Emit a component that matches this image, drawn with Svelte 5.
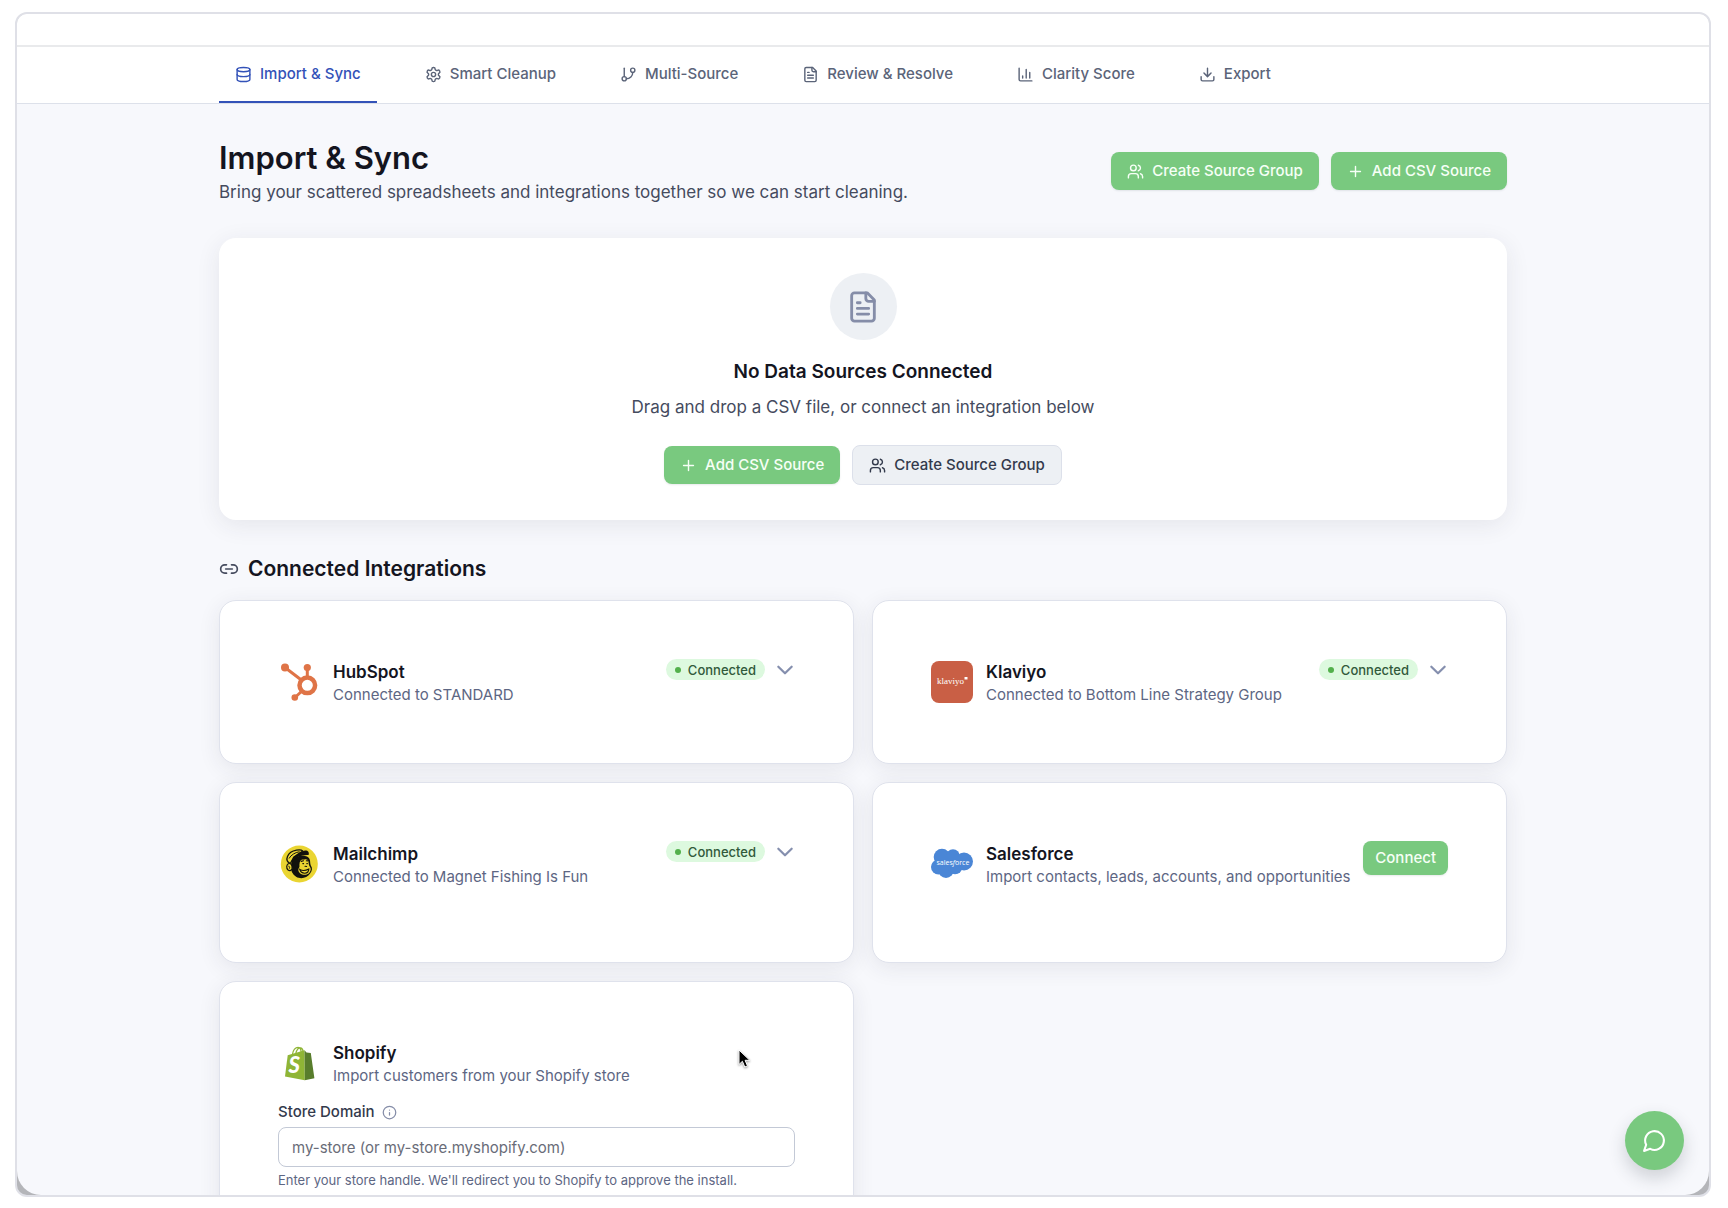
<script>
  const tabs = [
    { label: 'Import & Sync', icon: 'database', active: true },
    { label: 'Smart Cleanup', icon: 'gear' },
    { label: 'Multi-Source', icon: 'branch' },
    { label: 'Review & Resolve', icon: 'file' },
    { label: 'Clarity Score', icon: 'chart' },
    { label: 'Export', icon: 'download' }
  ];

  const integrations = [
    { id: 'hubspot', name: 'HubSpot', text: 'Connected to STANDARD', connected: true },
    { id: 'klaviyo', name: 'Klaviyo', text: 'Connected to Bottom Line Strategy Group', connected: true },
    { id: 'mailchimp', name: 'Mailchimp', text: 'Connected to Magnet Fishing Is Fun', connected: true },
    { id: 'salesforce', name: 'Salesforce', text: 'Import contacts, leads, accounts, and opportunities', action: 'Connect' },
    { id: 'shopify', name: 'Shopify', text: 'Import customers from your Shopify store', form: true }
  ];

  let domain = $state('');
</script>

{#snippet icon(name)}
  <svg class="icon" viewBox="0 0 24 24" aria-hidden="true">
    {#if name === 'database'}
      <ellipse cx="12" cy="5" rx="9" ry="3" />
      <path d="M3 5v14a9 3 0 0 0 18 0V5" />
      <path d="M3 12a9 3 0 0 0 18 0" />
    {:else if name === 'gear'}
      <path d="M12.22 2h-.44a2 2 0 0 0-2 2v.18a2 2 0 0 1-1 1.73l-.43.25a2 2 0 0 1-2 0l-.15-.08a2 2 0 0 0-2.73.73l-.22.38a2 2 0 0 0 .73 2.73l.15.1a2 2 0 0 1 1 1.72v.51a2 2 0 0 1-1 1.74l-.15.09a2 2 0 0 0-.73 2.73l.22.38a2 2 0 0 0 2.73.73l.15-.08a2 2 0 0 1 2 0l.43.25a2 2 0 0 1 1 1.73V20a2 2 0 0 0 2 2h.44a2 2 0 0 0 2-2v-.18a2 2 0 0 1 1-1.73l.43-.25a2 2 0 0 1 2 0l.15.08a2 2 0 0 0 2.73-.73l.22-.39a2 2 0 0 0-.73-2.73l-.15-.08a2 2 0 0 1-1-1.74v-.5a2 2 0 0 1 1-1.74l.15-.09a2 2 0 0 0 .73-2.73l-.22-.38a2 2 0 0 0-2.73-.73l-.15.08a2 2 0 0 1-2 0l-.43-.25a2 2 0 0 1-1-1.73V4a2 2 0 0 0-2-2z" />
      <circle cx="12" cy="12" r="3" />
    {:else if name === 'branch'}
      <path d="M6 3v12" />
      <circle cx="18" cy="6" r="3" />
      <circle cx="6" cy="18" r="3" />
      <path d="M18 9a9 9 0 0 1-9 9" />
    {:else if name === 'file'}
      <path d="M15 2H6a2 2 0 0 0-2 2v16a2 2 0 0 0 2 2h12a2 2 0 0 0 2-2V7Z" />
      <path d="M14 2v4a2 2 0 0 0 2 2h4" />
      <path d="M10 9H8M16 13H8M16 17H8" />
    {:else if name === 'chart'}
      <path d="M3 3v16a2 2 0 0 0 2 2h16" />
      <path d="M18 17V9M13 17V5M8 17v-3" />
    {:else if name === 'download'}
      <path d="M21 15v4a2 2 0 0 1-2 2H5a2 2 0 0 1-2-2v-4" />
      <path d="m7 10 5 5 5-5M12 15V3" />
    {:else if name === 'users'}
      <path d="M16 21v-2a4 4 0 0 0-4-4H6a4 4 0 0 0-4 4v2" />
      <circle cx="9" cy="7" r="4" />
      <path d="M22 21v-2a4 4 0 0 0-3-3.870M16 3.130a4 4 0 0 1 0 7.750" />
    {:else if name === 'plus'}
      <path d="M5 12h14M12 5v14" />
    {:else if name === 'link'}
      <path d="M9 17H7A5 5 0 0 1 7 7h2M15 7h2a5 5 0 1 1 0 10h-2M8 12h8" />
    {:else if name === 'info'}
      <circle cx="12" cy="12" r="10" />
      <path d="M12 16v-4M12 8h.01" />
    {:else if name === 'chat'}
      <path d="M7.900 20A9 9 0 1 0 4 16.100L2 22Z" />
    {/if}
  </svg>
{/snippet}

{#snippet logo(id)}
  <svg class="logo" viewBox="0 0 42 42" role="img" aria-label={id}>
    {#if id === 'hubspot'}
      <g stroke="#df7447" fill="none">
        <path stroke-width="3" d="M7 6.500 24 19.500M29.300 7v10M17 36.500l7-6.500" />
        <circle cx="29.300" cy="24.300" r="7.800" stroke-width="4.500" />
      </g>
      <g fill="#df7447">
        <circle cx="7" cy="6.500" r="4" />
        <circle cx="29.300" cy="6.500" r="3.600" />
        <circle cx="16.800" cy="36.500" r="3.300" />
      </g>
    {:else if id === 'klaviyo'}
      <rect width="42" height="42" rx="8" fill="#c95f45" />
      <text x="6" y="23" font-family="Liberation Serif, serif" font-size="9" fill="#ffffff">klaviyo</text>
      <path d="M33.500 16h3v2.500h-3z" fill="#ffffff" />
    {:else if id === 'mailchimp'}
      <circle cx="21.300" cy="21" r="18.500" fill="#ead532" />
      <path d="M14 17c3-3 8-5 13-4 3 .5 4.500 2 5 4.500.3 2 .2 3.500.8 5 2 2.500 1.300 5.500-.7 8-3.200 4.600-9.300 6-14 3.200-3.700-2.200-5.300-6-5.600-10.200z" fill="#12120c" />
      <path d="M21.500 21c0-3.200 2.200-5.200 4.500-4.300 1.600-1 4-.4 4.400 1.500.4 2 .2 3.800 1.300 5.300 1.900 2.300.9 5.200-1 6.900-2.500 2-6.300 1.700-8.700-.2-2-1.700-2.200-4.300-.7-6 .5-1-.1-2 .2-3.200z" fill="#ead532" />
      <path d="M21.800 26.500c2.800 1.600 6 1.200 9-.4-.2 2.600-1.800 4.200-4.200 4.100-2.400-.1-4.100-1.500-4.800-3.700zM23.200 18.400l2.300-.7M28.300 17.700l1.500.2M24.800 20.600h.8M28.800 20.600h.6M27 23.300l1.700.2" fill="none" stroke="#12120c" stroke-width="1.100" stroke-linecap="round" />
      <path d="M12.300 20.500C6 17.500 9 9 18.500 7.200c3-.6 5-.3 6.300.8l-9 6z" fill="#ead532" stroke="#12120c" stroke-width="1.300" stroke-linejoin="round" />
      <path d="M11 15.500C13 12 17 9.500 21.500 8.700" fill="none" stroke="#12120c" stroke-width="1" />
      <path d="M13.500 18c2.500-5 7-9 13.500-10.500 3-.2 4.500 1.700 3.600 4.500-6-.5-11.600 1.500-17.100 6z" fill="#12120c" />
      <path d="M11 20.500c-2.700.4-3 4.800-.9 6.500 1.600 1.200 3.800.3 4-1.700.1-2.200-.6-5-3.100-4.800z" fill="#ead532" stroke="#12120c" stroke-width="1.200" />
      <path d="M10.500 23.200c1 .1 1.500 1 .9 2.400" fill="none" stroke="#12120c" stroke-width="1" />
    {:else if id === 'salesforce'}
      <g fill="#4a86d6">
        <circle cx="11" cy="14" r="8.300" />
        <circle cx="22" cy="13" r="6.800" />
        <circle cx="33" cy="18.500" r="9" />
        <circle cx="7.500" cy="24" r="7.500" />
        <circle cx="15" cy="27" r="7.900" />
        <circle cx="24" cy="24" r="7.300" />
        <path d="M8 12h24v14H8z" />
      </g>
      <text x="5.500" y="21.500" font-family="Open Sans, sans-serif" font-size="7" fill="#ffffff">sales<tspan font-style="italic">f</tspan>orce</text>
    {:else if id === 'shopify'}
      <path d="M14.500 12.500c.5-4.500 3-7.200 5.600-7.200 2 0 3 2.300 3.100 5.500M17.800 11.500c.7-3.700 2.800-6 5-5.500 1.500.4 2.200 2.100 2.500 4" fill="none" stroke="#8fb536" stroke-width="1.300" />
      <path d="M9.700 13.200 26.500 8.200 26.800 38.300 7 34.600z" fill="#8fb536" />
      <path d="m26.500 8.200 2 2.300 4.300.5 3.600 25.200-9.600 2.100z" fill="#587d2c" />
      <text x="10.500" y="31" font-family="Lato, sans-serif" font-size="22" font-weight="900" font-style="italic" fill="#ffffff">S</text>
    {/if}
  </svg>
{/snippet}

<div class="page">
  <div class="frame">
    <div class="screen">
      <div class="strip"></div>
      <nav>
        <div class="container tabs">
          {#each tabs as tab}
            <a href="#{tab.icon}" class="tab" class:active={tab.active} aria-current={tab.active ? 'page' : undefined}>
              {@render icon(tab.icon)}{tab.label}
            </a>
          {/each}
        </div>
      </nav>

      <main class="container">
        <header>
          <div>
            <h1>Import &amp; Sync</h1>
            <p class="lead">Bring your scattered spreadsheets and integrations together so we can start cleaning.</p>
          </div>
          <div class="actions">
            <button class="btn">{@render icon('users')}Create Source Group</button>
            <button class="btn">{@render icon('plus')}Add CSV Source</button>
          </div>
        </header>

        <section class="empty">
          <div class="disc">{@render icon('file')}</div>
          <h2>No Data Sources Connected</h2>
          <p class="lead">Drag and drop a CSV file, or connect an integration below</p>
          <div class="actions">
            <button class="btn">{@render icon('plus')}Add CSV Source</button>
            <button class="btn secondary">{@render icon('users')}Create Source Group</button>
          </div>
        </section>

        <h2 class="section-title">{@render icon('link')}Connected Integrations</h2>

        <div class="grid">
          {#each integrations as item}
            <article class="card" class:tall={item.action}>
              <div class="row">
                {@render logo(item.id)}
                <div class="details">
                  <h3>{item.name}</h3>
                  <p>{item.text}</p>
                </div>
                {#if item.connected}
                  <span class="badge"><i></i>Connected</span>
                  <button class="toggle" aria-label="Show {item.name} details">
                    <svg viewBox="3 6 18 12" aria-hidden="true"><path d="m6 9 6 6 6-6" /></svg>
                  </button>
                {:else if item.action}
                  <button class="btn connect">{item.action}</button>
                {/if}
              </div>
              {#if item.form}
                <div class="field">
                  <label for="domain">Store Domain {@render icon('info')}</label>
                  <input id="domain" type="text" placeholder="my-store (or my-store.myshopify.com)" bind:value={domain} />
                  <small>Enter your store handle. We'll redirect you to Shopify to approve the install.</small>
                </div>
              {/if}
            </article>
          {/each}
        </div>
      </main>
    </div>

    <svg class="cursor" viewBox="0 0 14 20" aria-hidden="true">
      <path d="M1 1v14.500l3.400-3.200 2.400 5.700 2.700-1.100-2.400-5.600h4.700z" />
    </svg>
    <button class="fab" aria-label="Open chat">{@render icon('chat')}</button>
  </div>
</div>

<style>
  :global(body) {
    margin: 0;
    background: #ffffff;
  }
  * {
    box-sizing: border-box;
  }
  .page {
    height: 100vh;
    padding: 12px 17px 11px 15px;
    font-family: Inter, 'Liberation Sans', sans-serif;
    font-size: 15px;
    line-height: 22px;
    color: #14151f;
  }
  .frame {
    position: relative;
    height: 100%;
    border: 2px solid #dfe0e7;
    border-radius: 12px;
    background: #b4b5b9;
    overflow: hidden;
  }
  .screen {
    height: 100%;
    overflow: hidden;
    background: #f7f8fc;
    border-radius: 0 0 24px 24px;
  }
  .strip {
    height: 33px;
    background: #ffffff;
    border-bottom: 2px solid #e9eaec;
  }
  nav {
    background: #ffffff;
    border-bottom: 1px solid #dde1ea;
  }
  .container {
    width: 100%;
    max-width: 1288px;
    margin: 0 auto;
  }
  h1, h2, h3, p {
    margin: 0;
  }
  .icon {
    width: 17px;
    height: 17px;
    flex: none;
    fill: none;
    stroke: currentColor;
    stroke-width: 2;
    stroke-linecap: round;
    stroke-linejoin: round;
  }
  .tabs {
    display: flex;
    gap: 32px;
  }
  .tab {
    display: flex;
    align-items: center;
    gap: 8px;
    padding: 17px 16px;
    border-bottom: 2px solid transparent;
    line-height: 20px;
    font-weight: 500;
    color: #5b6479;
    text-decoration: none;
  }
  .tab.active {
    color: #3352b8;
    border-color: #3352b8;
  }
  main {
    padding-top: 33px;
  }
  header {
    display: flex;
    justify-content: space-between;
    align-items: center;
    margin-bottom: 33px;
  }
  h1 {
    font-size: 31px;
    line-height: 42px;
    font-weight: 600;
  }
  .lead {
    font-size: 17px;
    line-height: 26px;
    color: #454b5e;
  }
  .actions {
    display: flex;
    align-items: center;
    gap: 12px;
  }
  button {
    font: inherit;
    border: 0;
    cursor: pointer;
  }
  .btn {
    display: flex;
    align-items: center;
    gap: 8px;
    height: 38px;
    padding: 0 16px;
    border-radius: 8px;
    background: #79c97f;
    color: #f6fff6;
    font-weight: 500;
    box-shadow: 0 1px 2px rgba(30, 50, 60, 0.1);
  }
  .btn.secondary {
    height: 40px;
    background: #edf0f4;
    border: 1px solid #dce0ea;
    color: #333a4c;
    box-shadow: none;
  }
  .btn.connect {
    height: 34px;
    padding: 0 12px;
  }
  .empty {
    display: flex;
    flex-direction: column;
    align-items: center;
    padding: 35px;
    border-radius: 17px;
    background: #ffffff;
    box-shadow: 0 5px 24px rgba(40, 45, 70, 0.09);
  }
  .disc {
    display: grid;
    place-items: center;
    width: 67px;
    height: 67px;
    border-radius: 50%;
    background: #edf0f4;
    color: #858da8;
  }
  .disc .icon {
    width: 34px;
    height: 34px;
  }
  .empty h2 {
    margin-top: 18px;
    font-size: 19px;
    line-height: 28px;
    font-weight: 600;
  }
  .empty .lead {
    margin: 8px 0 25px;
  }
  .section-title {
    display: flex;
    align-items: center;
    gap: 9px;
    margin: 36px 0 18px;
    font-size: 21px;
    line-height: 26px;
    font-weight: 600;
  }
  .section-title .icon {
    width: 20px;
    height: 20px;
    color: #454b5e;
  }
  .grid {
    display: grid;
    grid-template-columns: 1fr 1fr;
    gap: 18px;
  }
  .card {
    padding: 58px;
    border: 1px solid #dfe2ec;
    border-radius: 17px;
    background: #ffffff;
    box-shadow: 0 5px 22px rgba(40, 45, 70, 0.09);
  }
  .card.tall {
    padding-bottom: 75px;
  }
  .row {
    display: flex;
    align-items: flex-start;
    min-height: 46px;
  }
  .logo {
    width: 42px;
    height: 42px;
    flex: none;
    align-self: center;
    margin-right: 13px;
  }
  .details {
    flex: 1;
  }
  h3 {
    font-size: 17px;
    line-height: 26px;
    font-weight: 600;
  }
  .details p {
    line-height: 20px;
    color: #5d6683;
  }
  .badge {
    display: flex;
    align-items: center;
    gap: 7px;
    height: 21px;
    padding: 0 9px;
    border-radius: 11px;
    background: #ddf9df;
    color: #315a3b;
    font-size: 13px;
    font-weight: 500;
  }
  .badge i {
    width: 6px;
    height: 6px;
    border-radius: 50%;
    background: #53b04c;
  }
  .toggle {
    display: grid;
    place-items: center;
    height: 21px;
    margin-left: 10px;
    padding: 0;
    background: none;
  }
  .toggle svg {
    width: 20px;
    height: 14px;
    fill: none;
    stroke: #858fae;
    stroke-width: 2;
    stroke-linecap: round;
    stroke-linejoin: round;
  }
  .field {
    display: flex;
    flex-direction: column;
    gap: 4px;
    margin-top: 15px;
  }
  label {
    display: flex;
    align-items: center;
    gap: 7px;
    font-weight: 500;
    color: #333a4c;
  }
  label .icon {
    width: 15px;
    height: 15px;
    color: #858da8;
  }
  input {
    height: 40px;
    padding: 0 13px;
    border: 1px solid #c3c9d6;
    border-radius: 8px;
    background: #ffffff;
    font: inherit;
    color: #14151f;
  }
  input::placeholder {
    color: #696c78;
    opacity: 1;
  }
  small {
    font-size: 13px;
    line-height: 18px;
    color: #5d6683;
  }
  .cursor {
    position: absolute;
    left: 721px;
    top: 1035px;
    width: 14px;
    height: 20px;
    fill: #000000;
    stroke: #ffffff;
    stroke-width: 1;
    filter: drop-shadow(0 1px 1px rgba(0, 0, 0, 0.4));
  }
  .fab {
    position: absolute;
    right: 25px;
    bottom: 25px;
    display: grid;
    place-items: center;
    width: 59px;
    height: 59px;
    padding: 0;
    border-radius: 50%;
    background: #79c97f;
    color: #ffffff;
    box-shadow: 0 8px 18px rgba(40, 50, 60, 0.2);
  }
  .fab .icon {
    width: 25px;
    height: 25px;
  }
</style>
